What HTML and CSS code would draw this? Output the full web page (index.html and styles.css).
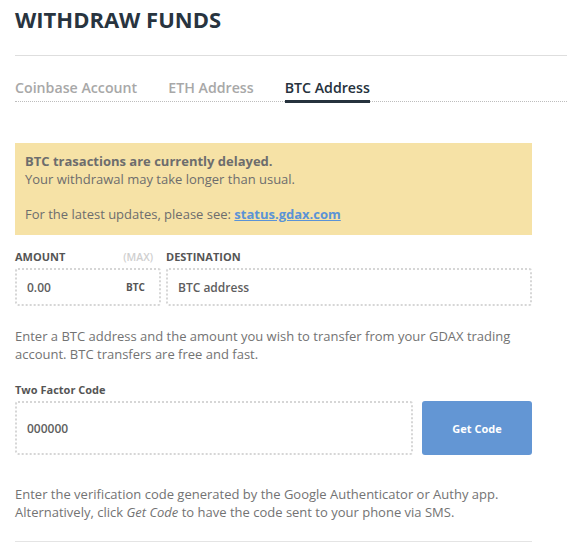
FILE: index.html
```html
<!DOCTYPE html>
<html>
<head>
<meta charset="utf-8">
<link rel="stylesheet" href="styles.css">
</head>
<body>
<div class="page">
  <h1 class="title">WITHDRAW FUNDS</h1>
  <hr class="rule">
  <nav class="tabs">
    <span class="tab">Coinbase Account</span>
    <span class="tab">ETH Address</span>
    <span class="tab active">BTC Address</span>
  </nav>
  <div class="form">
    <div class="alert">
      <div class="alert-strong">BTC trasactions are currently delayed.</div>
      <div>Your withdrawal may take longer than usual.</div>
      <div class="alert-gap">For the latest updates, please see: <a class="link" href="#">status.gdax.com</a></div>
    </div>
    <div class="fields">
      <div class="field amount">
        <div class="label-row"><span class="label">AMOUNT</span><span class="max">(MAX)</span></div>
        <div class="input"><span class="value">0.00</span><span class="unit">BTC</span></div>
      </div>
      <div class="field dest">
        <div class="label-row"><span class="label">DESTINATION</span></div>
        <div class="input"><span class="value">BTC address</span></div>
      </div>
    </div>
    <p class="help">Enter a BTC address and the amount you wish to transfer from your GDAX trading account. BTC transfers are free and fast.</p>
    <div class="label tf-label">Two Factor Code</div>
    <div class="tf-row">
      <div class="input tall"><span class="value">000000</span></div>
      <button class="btn">Get Code</button>
    </div>
    <p class="help">Enter the verification code generated by the Google Authenticator or Authy app. Alternatively, click <em>Get Code</em> to have the code sent to your phone via SMS.</p>
    <hr class="rule bottom">
  </div>
</div>
</body>
</html>
```

FILE: styles.css
```css
html, body {
  margin: 0;
  padding: 0;
  background: #fff;
}
body {
  font-family: "Open Sans", "Liberation Sans", sans-serif;
  color: #707070;
}
.page {
  padding-left: 15px;
}
.title {
  margin: 4px 0 0;
  font-size: 22px;
  line-height: 30px;
  font-weight: 700;
  color: #28343f;
  letter-spacing: 0;
}
.rule {
  margin: 21px 0 0;
  border: 0;
  height: 1px;
  background: #dedede;
}
.tabs {
  display: flex;
  gap: 31px;
  margin-top: 22px;
  border-bottom: 1px dotted #bdbdbd;
}
.tab {
  font-size: 14.2px;
  line-height: 20px;
  font-weight: 600;
  color: #a8a8a8;
  padding-bottom: 2px;
  border-bottom: 3px solid transparent;
  margin-bottom: -2px;
}
.tab.active {
  color: #26323d;
  border-bottom-color: #26323d;
}
.form {
  width: 517px;
}
.alert {
  margin-top: 41px;
  background: #f6e2a6;
  padding: 10px 10px 12px;
  font-size: 13px;
  line-height: 17.5px;
  color: #6d6d6d;
}
.alert-strong {
  font-weight: 700;
}
.alert-gap {
  margin-top: 17.5px;
}
.link {
  color: #5b93d6;
  font-weight: 700;
  text-decoration: underline;
}
.fields {
  display: flex;
  gap: 5px;
  margin-top: 15px;
}
.field.amount {
  width: 146px;
}
.field.dest {
  flex: 1;
}
.label-row {
  display: flex;
  justify-content: space-between;
  margin-bottom: 4px;
}
.label {
  font-size: 11px;
  line-height: 14px;
  font-weight: 700;
  color: #555;
}
.max {
  font-size: 10.5px;
  line-height: 14px;
  font-weight: 600;
  color: #cfcfcf;
  margin-right: 8px;
}
.input {
  box-sizing: border-box;
  height: 38px;
  border: 2px dotted #d6d6d6;
  border-radius: 3px;
  display: flex;
  align-items: center;
  justify-content: space-between;
  padding: 0 14px 0 10px;
}
.value {
  font-size: 12px;
  font-weight: 600;
  color: #5e5e5e;
}
.unit {
  font-size: 10px;
  font-weight: 700;
  color: #555;
}
.help {
  margin: 21px 0 0;
  font-size: 13px;
  line-height: 18px;
  color: #737373;
}
.tf-label {
  margin-top: 20px;
  margin-bottom: 4px;
}
.tf-row {
  display: flex;
  gap: 9px;
}
.input.tall {
  width: 398px;
  height: 54px;
}
.btn {
  flex: 1;
  height: 54px;
  border: 0;
  border-radius: 3px;
  background: #6396d4;
  color: #fff;
  font-family: "Open Sans", "Liberation Sans", sans-serif;
  font-size: 11px;
  font-weight: 700;
}
.tf-row + .help {
  margin-top: 30px;
}
.rule.bottom {
  margin-top: 20px;
  background: #e4e4e4;
}
```
